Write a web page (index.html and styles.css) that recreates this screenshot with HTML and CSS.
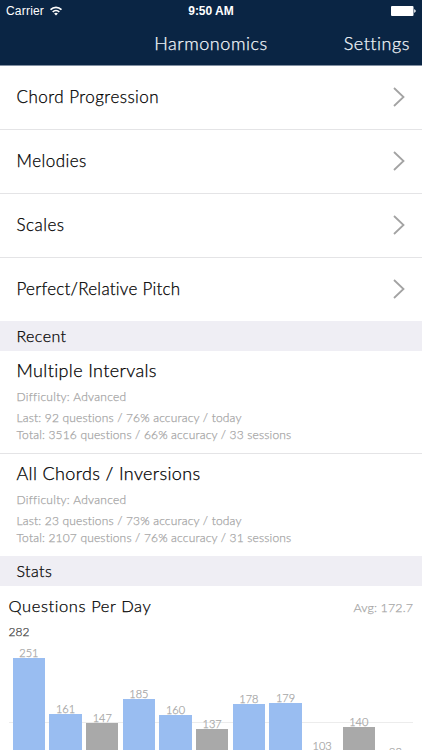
FILE: index.html
```html
<!DOCTYPE html>
<html lang="en">
<head>
<meta charset="utf-8">
<title>Harmonomics</title>
<link rel="stylesheet" href="styles.css">
</head>
<body>
<header class="top">
  <div class="status">
    <div class="carrier"><span>Carrier</span>
      <svg width="12" height="10" viewBox="0 0 12 10" fill="none" stroke="#fff" stroke-width="1.7"><path d="M.6 3.7C3.6.5 8.4.5 11.4 3.7M2.7 6c1.9-1.9 4.7-1.9 6.6 0"/><path d="M6 9.5 4.1 7.5c1.1-1 2.7-1 3.8 0z" fill="#fff" stroke="none"/></svg>
    </div>
    <div class="clock">9:50 AM</div>
    <svg class="battery" width="25" height="10" viewBox="0 0 25 10" fill="#fff"><rect width="22.5" height="10" rx="1"/><path d="M23.2 3.2c2 .6 2 3 0 3.6z"/></svg>
  </div>
  <nav class="nav"><span></span><h1 class="title">Harmonomics</h1><a class="settings">Settings</a></nav>
</header>
<main>
  <ul class="menu">
    <li class="item"><span>Chord Progression</span><svg class="chev" viewBox="0 0 12 20"><path d="M1 1l9.5 9L1 19"/></svg></li>
    <li class="item"><span>Melodies</span><svg class="chev" viewBox="0 0 12 20"><path d="M1 1l9.5 9L1 19"/></svg></li>
    <li class="item"><span>Scales</span><svg class="chev" viewBox="0 0 12 20"><path d="M1 1l9.5 9L1 19"/></svg></li>
    <li class="item"><span class="tight">Perfect/Relative Pitch</span><svg class="chev" viewBox="0 0 12 20"><path d="M1 1l9.5 9L1 19"/></svg></li>
  </ul>
  <h2 class="section">Recent</h2>
  <article class="recent">
    <h3>Multiple Intervals</h3>
    <p class="level">Difficulty: Advanced</p>
    <p>Last: 92 questions / 76% accuracy / today</p>
    <p>Total: 3516 questions / 66% accuracy / 33 sessions</p>
  </article>
  <article class="recent">
    <h3>All Chords / Inversions</h3>
    <p class="level">Difficulty: Advanced</p>
    <p>Last: 23 questions / 73% accuracy / today</p>
    <p>Total: 2107 questions / 76% accuracy / 31 sessions</p>
  </article>
  <h2 class="section">Stats</h2>
  <section class="stats">
    <div class="stats-head"><h3>Questions Per Day</h3><span class="avg">Avg: 172.7</span></div>
    <div class="max">282</div>
    <div class="chart">
      <div class="bar" style="--v:251"><span>251</span></div>
      <div class="bar" style="--v:161"><span>161</span></div>
      <div class="bar low" style="--v:147"><span>147</span></div>
      <div class="bar" style="--v:185"><span>185</span></div>
      <div class="bar" style="--v:160"><span>160</span></div>
      <div class="bar low" style="--v:137"><span>137</span></div>
      <div class="bar" style="--v:178"><span>178</span></div>
      <div class="bar" style="--v:179"><span>179</span></div>
      <div class="bar low" style="--v:103"><span>103</span></div>
      <div class="bar low" style="--v:140"><span>140</span></div>
      <div class="bar low" style="--v:93"><span>93</span></div>
    </div>
  </section>
</main>
</body>
</html>
```
FILE: styles.css
```css
* { box-sizing: border-box; margin: 0; padding: 0; }
html { height: 750px; overflow: hidden; }
body { width: 422px; height: 750px; overflow: hidden; background: #fff; color: #000; font-family: Lato, "Open Sans", sans-serif; font-weight: 300; -webkit-text-stroke: .25px currentColor; display: flex; flex-direction: column; }
h1, h2, h3 { font-weight: 300; }
.top { height: 65.5px; flex: none; background: #0a2544; color: #fff; border-bottom: 1px solid #8290a2; }
.status { height: 22px; display: grid; grid-template-columns: 1fr auto 1fr; align-items: center; padding: 0 6px; font: 12px/22px "Liberation Sans", Arial, sans-serif; -webkit-text-stroke: 0; }
.carrier { display: flex; align-items: center; gap: 6px; letter-spacing: .2px; }
.clock { font-weight: 700; font-size: 12px; }
.battery { justify-self: end; }
.nav { height: 41px; display: grid; grid-template-columns: 1fr auto 1fr; align-items: center; padding: 0 12px; color: #f2f6fa; }
.title { font-size: 18px; letter-spacing: .55px; }
.settings { justify-self: end; font-size: 18px; letter-spacing: .55px; }
main { flex: 1; min-height: 0; overflow: hidden; }
.menu { list-style: none; }
.item { height: 64px; display: flex; align-items: center; justify-content: space-between; padding: 0 17px 0 16.5px; border-bottom: 1px solid #e4e4e6; font-size: 17px; letter-spacing: .47px; }
.item span { margin-top: -1px; }
.item .tight { letter-spacing: .25px; }
.item:last-child { border: 0; height: 63.5px; }
.chev { width: 12px; height: 20px; fill: none; stroke: #a3a3a3; stroke-width: 1.8; }
.section { height: 30px; background: #efeef4; font-size: 16px; line-height: 30px; padding-left: 16.5px; letter-spacing: .4px; }
.recent { height: 103px; padding: 6px 17px 0 16.5px; border-bottom: 1px solid #e4e4e6; }
.recent + .section { margin-top: -1px; position: relative; }
.recent h3 { font-size: 18px; line-height: 26px; letter-spacing: .36px; }
.recent p { font-size: 12px; line-height: 16.5px; color: #a6a6a6; letter-spacing: .17px; }
.recent .level { margin: 6px 0 4.5px; letter-spacing: .28px; }
.stats { padding: 8px 9px 0 8.5px; }
.stats-head { display: flex; justify-content: space-between; align-items: center; height: 25px; }
.stats-head h3 { font-size: 16.5px; letter-spacing: .6px; margin-top: -1px; }
.avg { color: #a6a6a6; font-size: 12.5px; letter-spacing: .1px; padding-top: 2px; }
.max { font-size: 12px; line-height: 25px; color: #444; }
.chart { height: 171px; display: grid; grid-template-columns: repeat(11, 32.4px); column-gap: 4.27px; align-items: end; padding-left: 4.2px; background: linear-gradient(#ececec, #ececec) 0 78px / 100% 1px no-repeat; }
.bar { height: calc(var(--v) * .6256px); background: #99bdf1; display: flex; justify-content: center; align-items: flex-start; }
.bar.low { background: #a9a9a9; }
.bar.low:nth-child(n+9):not(:nth-child(10)) { background: transparent; }
.bar span { margin-top: -12px; font-size: 11px; line-height: 13px; color: #a6a6a6; }
```
